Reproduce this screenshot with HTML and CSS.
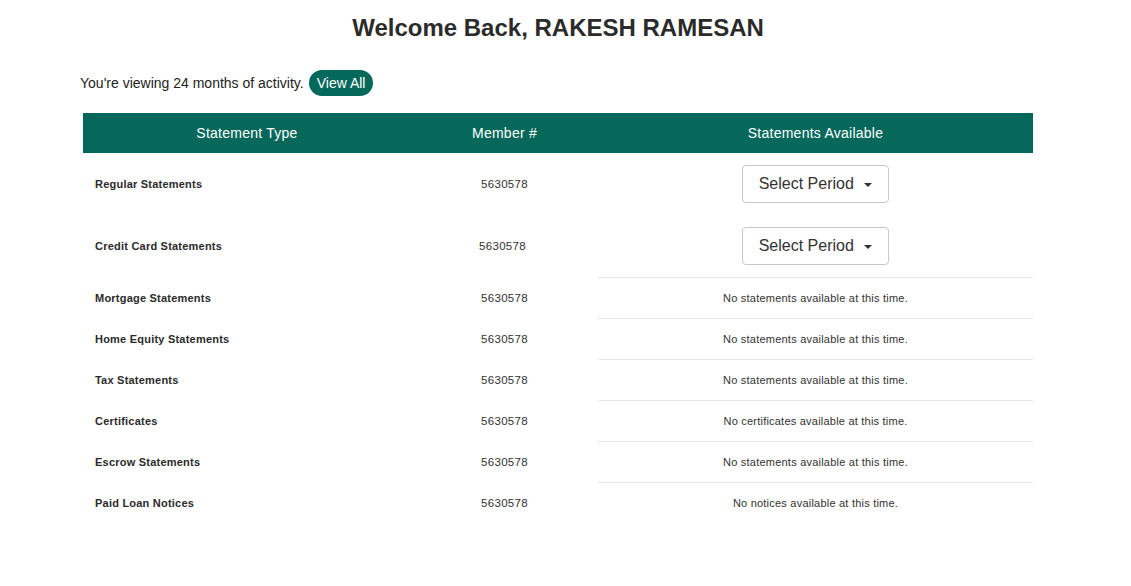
FILE: index.html
```html
<!DOCTYPE html>
<html>
<head>
<meta charset="utf-8">
<link rel="stylesheet" href="styles.css">
</head>
<body>
<div class="container">
  <h1 class="title">Welcome Back, RAKESH RAMESAN</h1>
  <div class="activity">
    <span>You're viewing 24 months of activity.</span>
    <button class="pill">View All</button>
  </div>
  <table class="stmts">
    <colgroup>
      <col class="c1"><col class="c2"><col class="c3">
    </colgroup>
    <thead>
      <tr><th>Statement Type</th><th>Member #</th><th>Statements Available</th></tr>
    </thead>
    <tbody>
      <tr class="sel-row">
        <td class="type">Regular Statements</td>
        <td class="num">5630578</td>
        <td class="avail"><button class="select">Select Period <span class="caret"></span></button></td>
      </tr>
      <tr class="sel-row">
        <td class="type">Credit Card Statements</td>
        <td class="num shift">5630578</td>
        <td class="avail"><button class="select">Select Period <span class="caret"></span></button></td>
      </tr>
      <tr class="none-row">
        <td class="type">Mortgage Statements</td>
        <td class="num">5630578</td>
        <td class="avail msg">No statements available at this time.</td>
      </tr>
      <tr class="none-row">
        <td class="type">Home Equity Statements</td>
        <td class="num">5630578</td>
        <td class="avail msg">No statements available at this time.</td>
      </tr>
      <tr class="none-row">
        <td class="type">Tax Statements</td>
        <td class="num">5630578</td>
        <td class="avail msg">No statements available at this time.</td>
      </tr>
      <tr class="none-row">
        <td class="type">Certificates</td>
        <td class="num">5630578</td>
        <td class="avail msg">No certificates available at this time.</td>
      </tr>
      <tr class="none-row">
        <td class="type">Escrow Statements</td>
        <td class="num">5630578</td>
        <td class="avail msg">No statements available at this time.</td>
      </tr>
      <tr class="none-row">
        <td class="type">Paid Loan Notices</td>
        <td class="num">5630578</td>
        <td class="avail msg">No notices available at this time.</td>
      </tr>
    </tbody>
  </table>
</div>
</body>
</html>
```

FILE: styles.css
```css
* { box-sizing: border-box; }
html, body { margin: 0; padding: 0; background: #fff; }
body {
  font-family: "Liberation Sans", Arial, Helvetica, sans-serif;
  color: #333;
}
.container {
  width: 950px;
  margin-left: 83px;
  padding-top: 14px;
}
.title {
  margin: 0;
  text-align: center;
  font-size: 24px;
  font-weight: bold;
  line-height: 28px;
  color: #2b2b2b;
}
.activity {
  display: flex;
  align-items: center;
  margin-top: 28px;
  margin-left: -3px;
  height: 26px;
  font-size: 14px;
  color: #222;
}
.pill {
  margin-left: 5px;
  height: 26px;
  padding: 0 8px;
  border: 0;
  border-radius: 13px;
  background: #04685a;
  color: #fff;
  font-family: inherit;
  font-size: 14px;
  line-height: 26px;
}
.stmts {
  margin-top: 17px;
  width: 950px;
  border-collapse: collapse;
  table-layout: fixed;
}
.c1 { width: 328px; }
.c2 { width: 187px; }
.c3 { width: 435px; }
.stmts th {
  height: 40px;
  padding: 0;
  background: #05685a;
  color: #fff;
  font-size: 14px;
  font-weight: normal;
  letter-spacing: 0.25px;
  text-align: center;
}
.stmts td {
  padding: 0;
  font-size: 11px;
  letter-spacing: 0.22px;
  vertical-align: middle;
}
.sel-row td { height: 62px; }
.none-row td { height: 41px; }
.type {
  padding-left: 12px !important;
  font-weight: bold;
  color: #2b2b2b;
}
.num { text-align: center; color: #333; font-size: 11.5px !important; letter-spacing: 0.3px !important; }
.num.shift { padding-right: 4px !important; }
.avail { text-align: center; }
.none-row .avail { border-top: 1px solid #e6e6e6; }
.msg { color: #333; }
.select {
  width: 147px;
  height: 38px;
  background: #fff;
  border: 1px solid #c8c8c8;
  border-radius: 4px;
  font-family: inherit;
  font-size: 16px;
  letter-spacing: 0;
  color: #333;
  padding: 0;
}
.caret {
  display: inline-block;
  width: 0;
  height: 0;
  margin-left: 6px;
  vertical-align: middle;
  border-top: 4px solid #333;
  border-left: 4px solid transparent;
  border-right: 4px solid transparent;
}
```
